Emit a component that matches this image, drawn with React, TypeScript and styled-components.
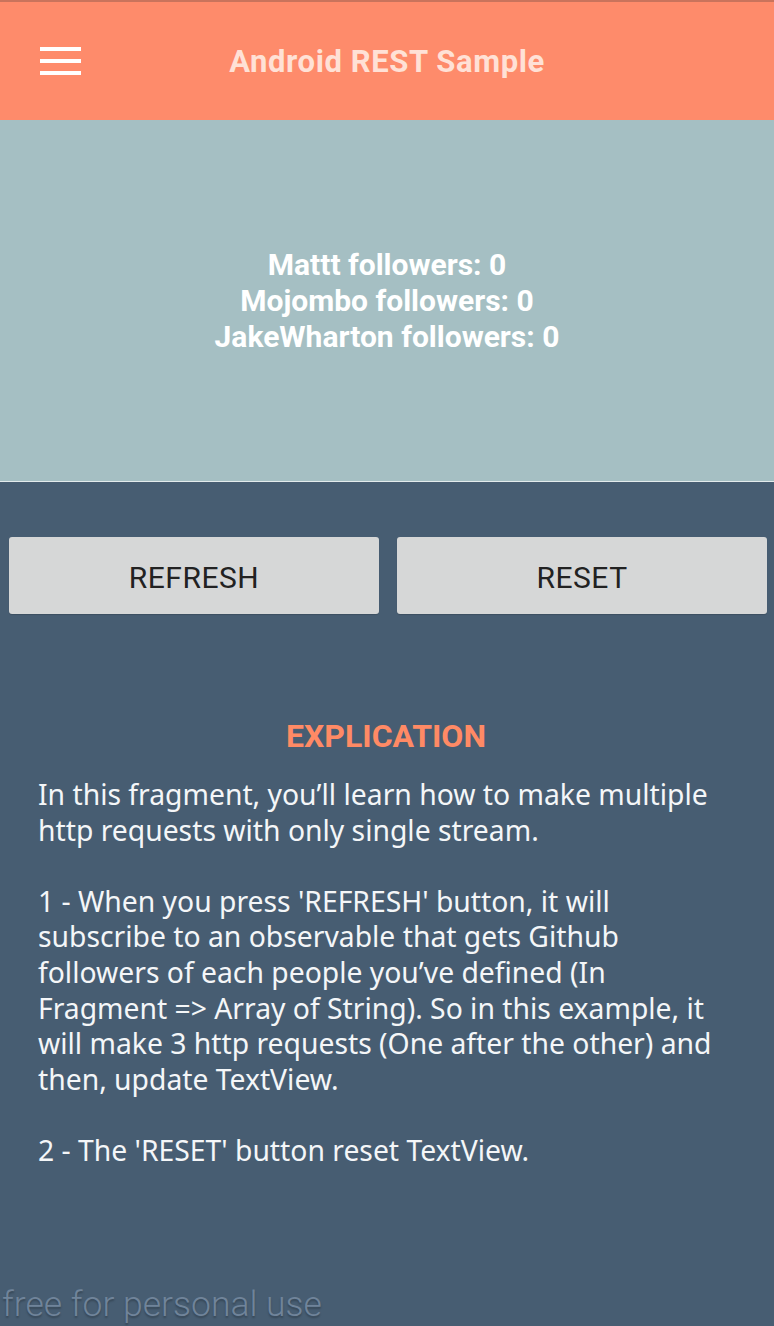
import React from 'react'
import styled, { createGlobalStyle } from 'styled-components'

const GlobalStyle = createGlobalStyle`
  html, body {
    margin: 0;
    padding: 0;
    background: #475d72;
  }
  * {
    box-sizing: border-box;
  }
`

const Screen = styled.div`
  width: 774px;
  height: 1326px;
  display: flex;
  flex-direction: column;
  background: #475d72;
  font-family: Roboto, "Liberation Sans", sans-serif;
  overflow: hidden;
`

const Toolbar = styled.header`
  height: 120px;
  flex-shrink: 0;
  display: flex;
  align-items: center;
  padding: 0 40px;
  background: #fe8b6b;
  border-top: 2px solid #c9735c;
`

const MenuButton = styled.div`
  width: 41px;
  display: flex;
  flex-direction: column;
  gap: 8px;
`

const MenuBar = styled.span`
  display: block;
  height: 4px;
  background: #ffffff;
`

// centred on the whole screen, so the right margin mirrors the menu button
const Title = styled.h1`
  flex: 1;
  margin: 0 41px 0 0;
  text-align: center;
  font-size: 31px;
  font-weight: 700;
  letter-spacing: 0.6px;
  color: #ffe1d6;
`

const Stats = styled.section`
  height: 362px;
  flex-shrink: 0;
  display: flex;
  flex-direction: column;
  align-items: center;
  justify-content: center;
  background: #a5bfc3;
  border-bottom: 1px solid #e3ebec;
  color: #ffffff;
  font-size: 30px;
  font-weight: 700;
  line-height: 36px;
`

const Buttons = styled.div`
  display: flex;
  gap: 18px;
  padding: 55px 7px 0 9px;
`

const ActionButton = styled.button`
  flex: 1;
  height: 77px;
  border: none;
  border-radius: 3px;
  background: #d6d7d7;
  color: #222222;
  font-family: Roboto, "Liberation Sans", sans-serif;
  font-size: 30px;
  letter-spacing: 0.5px;
  padding: 4px 0 0;
  box-shadow: 0 1px 1px rgba(0, 0, 0, 0.15);
`

const Explanation = styled.section`
  padding: 104px 40px 0 38px;
  color: #ffffff;
`

const Heading = styled.h2`
  margin: 0 0 23px;
  text-align: center;
  color: #ff8a65;
  font-size: 32px;
  font-weight: 700;
  line-height: 36px;
`

const Paragraph = styled.p`
  margin: 0 0 35.6px;
  font-family: "Noto Sans", Roboto, sans-serif;
  font-size: 28.3px;
  line-height: 35.6px;
  color: #f4f6f8;
`

const Watermark = styled.div`
  margin-top: auto;
  padding: 0 0 1px 2px;
  font-size: 35.5px;
  font-weight: 300;
  color: #70849a;
  text-shadow: 0 2px 2px rgba(0, 0, 0, 0.25);
`

const App: React.FC = () => {
  return (
    <Screen>
      <GlobalStyle />
      <Toolbar>
        <MenuButton>
          <MenuBar />
          <MenuBar />
          <MenuBar />
        </MenuButton>
        <Title>Android REST Sample</Title>
      </Toolbar>
      <Stats>
        <div>Mattt followers: 0</div>
        <div>Mojombo followers: 0</div>
        <div>JakeWharton followers: 0</div>
      </Stats>
      <Buttons>
        <ActionButton>REFRESH</ActionButton>
        <ActionButton>RESET</ActionButton>
      </Buttons>
      <Explanation>
        <Heading>EXPLICATION</Heading>
        <Paragraph>
          In this fragment, you’ll learn how to make multiple http requests with only single stream.
        </Paragraph>
        <Paragraph>
          1 - When you press 'REFRESH' button, it will subscribe to an observable that gets Github
          followers of each people you’ve defined (In Fragment =&gt; Array of String). So in this
          example, it will make 3 http requests (One after the other) and then, update TextView.
        </Paragraph>
        <Paragraph>2 - The 'RESET' button reset TextView.</Paragraph>
      </Explanation>
      <Watermark>free for personal use</Watermark>
    </Screen>
  )
}

export default App
